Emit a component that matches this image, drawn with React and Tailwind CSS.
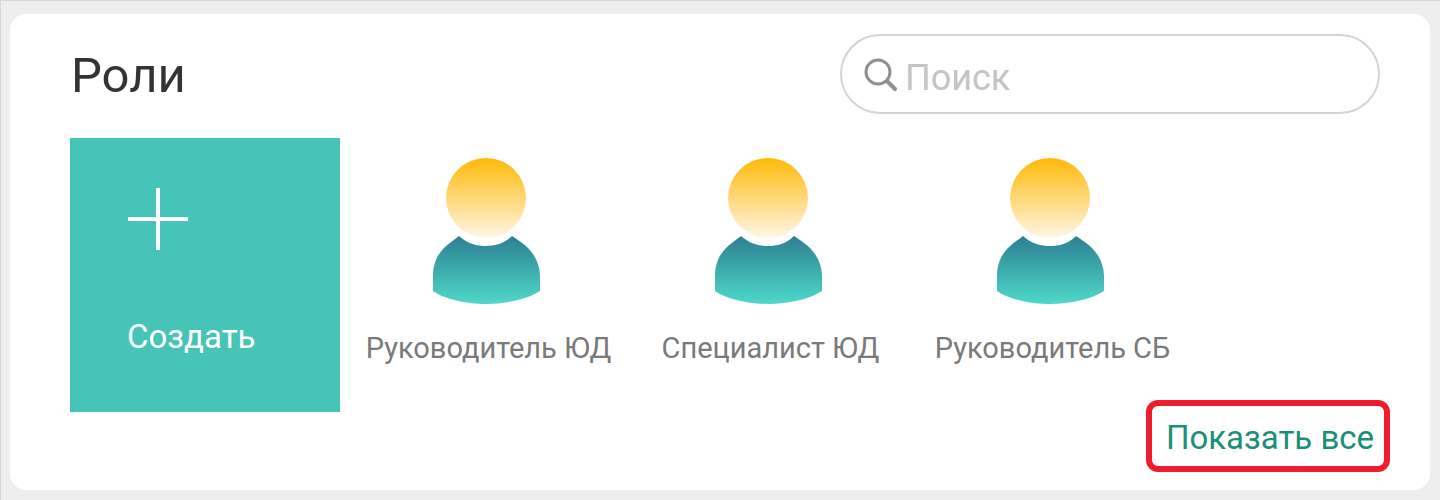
const roles = ["Руководитель ЮД", "Специалист ЮД", "Руководитель СБ"];

function RoleIcon() {
    return (
        <svg width="110" height="148" viewBox="0 0 110 148">
            <defs>
                <linearGradient id="head" x1="0" y1="0" x2="0" y2="1">
                    <stop offset="0" stopColor="#ffb907" />
                    <stop offset="1" stopColor="#fff6e6" />
                </linearGradient>
                <linearGradient id="body" x1="0" y1="0" x2="0" y2="1">
                    <stop offset="0" stopColor="#2c7f92" />
                    <stop offset="1" stopColor="#4ed8c8" />
                </linearGradient>
            </defs>
            <circle cx="54" cy="40" r="40" fill="url(#head)" />
            <path
                d="M27 78 C36 86 45 88 54 88 C63 88 72 86 80 78 C86 82 92 86 96 90 C104 98 108 108 108 118 L108 133 C96 141 74 146 54 146 C34 146 12 141 1 133 L1 118 C1 108 4 98 12 90 C16 86 22 82 27 78 Z"
                fill="url(#body)"
            />
        </svg>
    );
}

export default function App() {
    return (
        <div className="h-[500px] w-[1440px] border-t border-l border-[#d6d6d6] bg-[#eeeeee] pt-[13px] pl-[9px] pr-[10px] pb-[10px] font-['Roboto',sans-serif]">
            <div className="flex h-full flex-col rounded-[16px] bg-white pl-[60px] pr-[50px]">
                <div className="flex h-[124px] items-start justify-between">
                    <h1 className="mt-[34px] ml-[1px] text-[49px] leading-[56px] font-normal text-[#333333]">Роли</h1>
                    <div className="mt-[20px] flex h-[80px] w-[540px] items-center rounded-full border-2 border-[#d4d4d4] pl-[20px]">
                        <svg className="mt-[2px]" width="36" height="36" viewBox="0 0 36 36" fill="none" stroke="#8f8f8f">
                            <circle cx="16" cy="15" r="12" strokeWidth="3" />
                            <path d="M25 24 L33 32" strokeWidth="4" strokeLinecap="round" />
                        </svg>
                        <span className="mt-[8px] ml-[7px] text-[36px] leading-[44px] text-[#c4c4c4]">Поиск</span>
                    </div>
                </div>
                <div className="flex items-start">
                    <div className="flex h-[274px] w-[270px] flex-col bg-[#47c4b8] pt-[50px] pl-[57px] text-white">
                        <svg width="62" height="62" viewBox="0 0 62 62" stroke="#ffffff" strokeWidth="4">
                            <path d="M31 0 V62 M1 31 H61" />
                        </svg>
                        <span className="mt-[67px] text-[33px] leading-[40px]">Создать</span>
                    </div>
                    <div className="ml-[6px] flex">
                        {roles.map((role) => (
                            <div key={role} className="flex w-[282px] flex-col items-center pt-[20px] text-[#7a7a7a]">
                                <RoleIcon />
                                <span className="mt-[24px] ml-[3px] text-[29px] leading-[36px] whitespace-nowrap">{role}</span>
                            </div>
                        ))}
                    </div>
                </div>
                <div className="flex justify-end">
                    <a className="mt-[-12px] mr-[-10px] flex h-[72px] w-[244px] items-center justify-center rounded-[12px] border-[6px] border-[#f01c2e] pt-[4px] pl-[4px] text-[33px] text-[#1b9078]">
                        Показать все
                    </a>
                </div>
            </div>
        </div>
    );
}
